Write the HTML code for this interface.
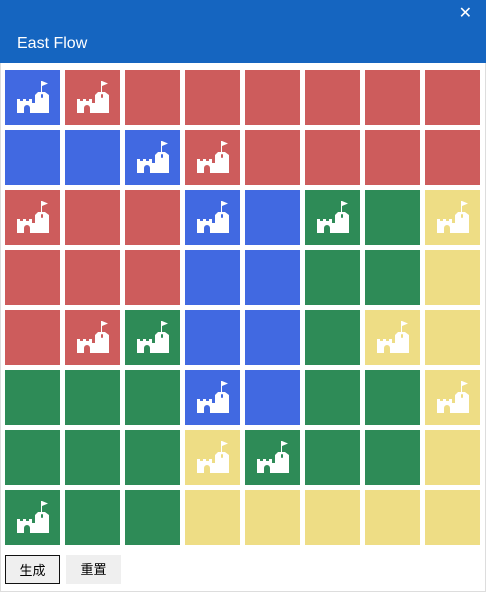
<!DOCTYPE html>
<html><head><meta charset="utf-8"><style>
html,body{margin:0;padding:0;}
body{width:486px;height:593px;background:#fff;position:relative;overflow:hidden;font-family:"Liberation Sans","Noto Sans CJK SC",sans-serif;border:0;}
.frame{position:absolute;left:0;top:0;width:484px;height:591px;border:1px solid #ddd;border-top:none;}
.hdr{position:absolute;left:0;top:0;width:486px;height:63px;background:#1565c0;}
.title{position:absolute;left:17px;top:35px;color:#fff;font-size:16px;}
.x{position:absolute;right:14px;top:3px;color:#fff;font-size:16px;}
.c{position:absolute;width:55px;height:55px;}
.B{background:#4169e1}.R{background:#cd5c5c}.G{background:#2e8b57}.Y{background:#eedd85}
.btn{position:absolute;top:555px;height:29px;width:55px;background:#efefef;font-size:13px;text-align:center;line-height:29px;box-sizing:border-box;}
</style></head><body>
<div class="frame"></div>
<div class="hdr"><div class="title">East Flow</div><div class="x">✕</div></div>
<svg width="0" height="0" style="position:absolute"><defs><symbol id="k" viewBox="0 0 55 55"><path fill="#fff" d="M36 11h1v11h-1zM37 11l6 2.5-6 2.5zM30 43V25l3-3h7l4 3v18zM12 29h3v2h3v-2h3v2h3v-2h3v4h3v10h-5v-5a3 3 0 0 0-6 0v5h-7z"/><rect x="36" y="24" width="2" height="4" rx="1" fill="currentColor"/></symbol></defs></svg>
<div id="g"></div>
<div class="btn" style="left:5px;border:1px solid #111;">生成</div>
<div class="btn" style="left:66px;">重置</div>
<script>
var m=["B*R*R R R R R R ","B B B*R*R R R R ","R*R R B*B G*G Y*","R R R B B G G Y ","R R*G*B B G Y*Y ","G G G B*B G G Y*","G G G Y*G*G G Y ","G*G G Y Y Y Y Y "];
var col={B:"#4169e1",R:"#cd5c5c",G:"#2e8b57",Y:"#eedd85"};
var h="";
for(var r=0;r<8;r++)for(var c=0;c<8;c++){var k=m[r][c*2],s=m[r][c*2+1]=="*";
h+='<div class="c '+k+'" style="left:'+(5+c*60)+'px;top:'+(70+r*60)+'px">'+(s?'<svg width="55" height="55" style="color:'+col[k]+'"><use href="#k"/></svg>':'')+'</div>';}
document.getElementById("g").innerHTML=h;
</script>
</body></html>
